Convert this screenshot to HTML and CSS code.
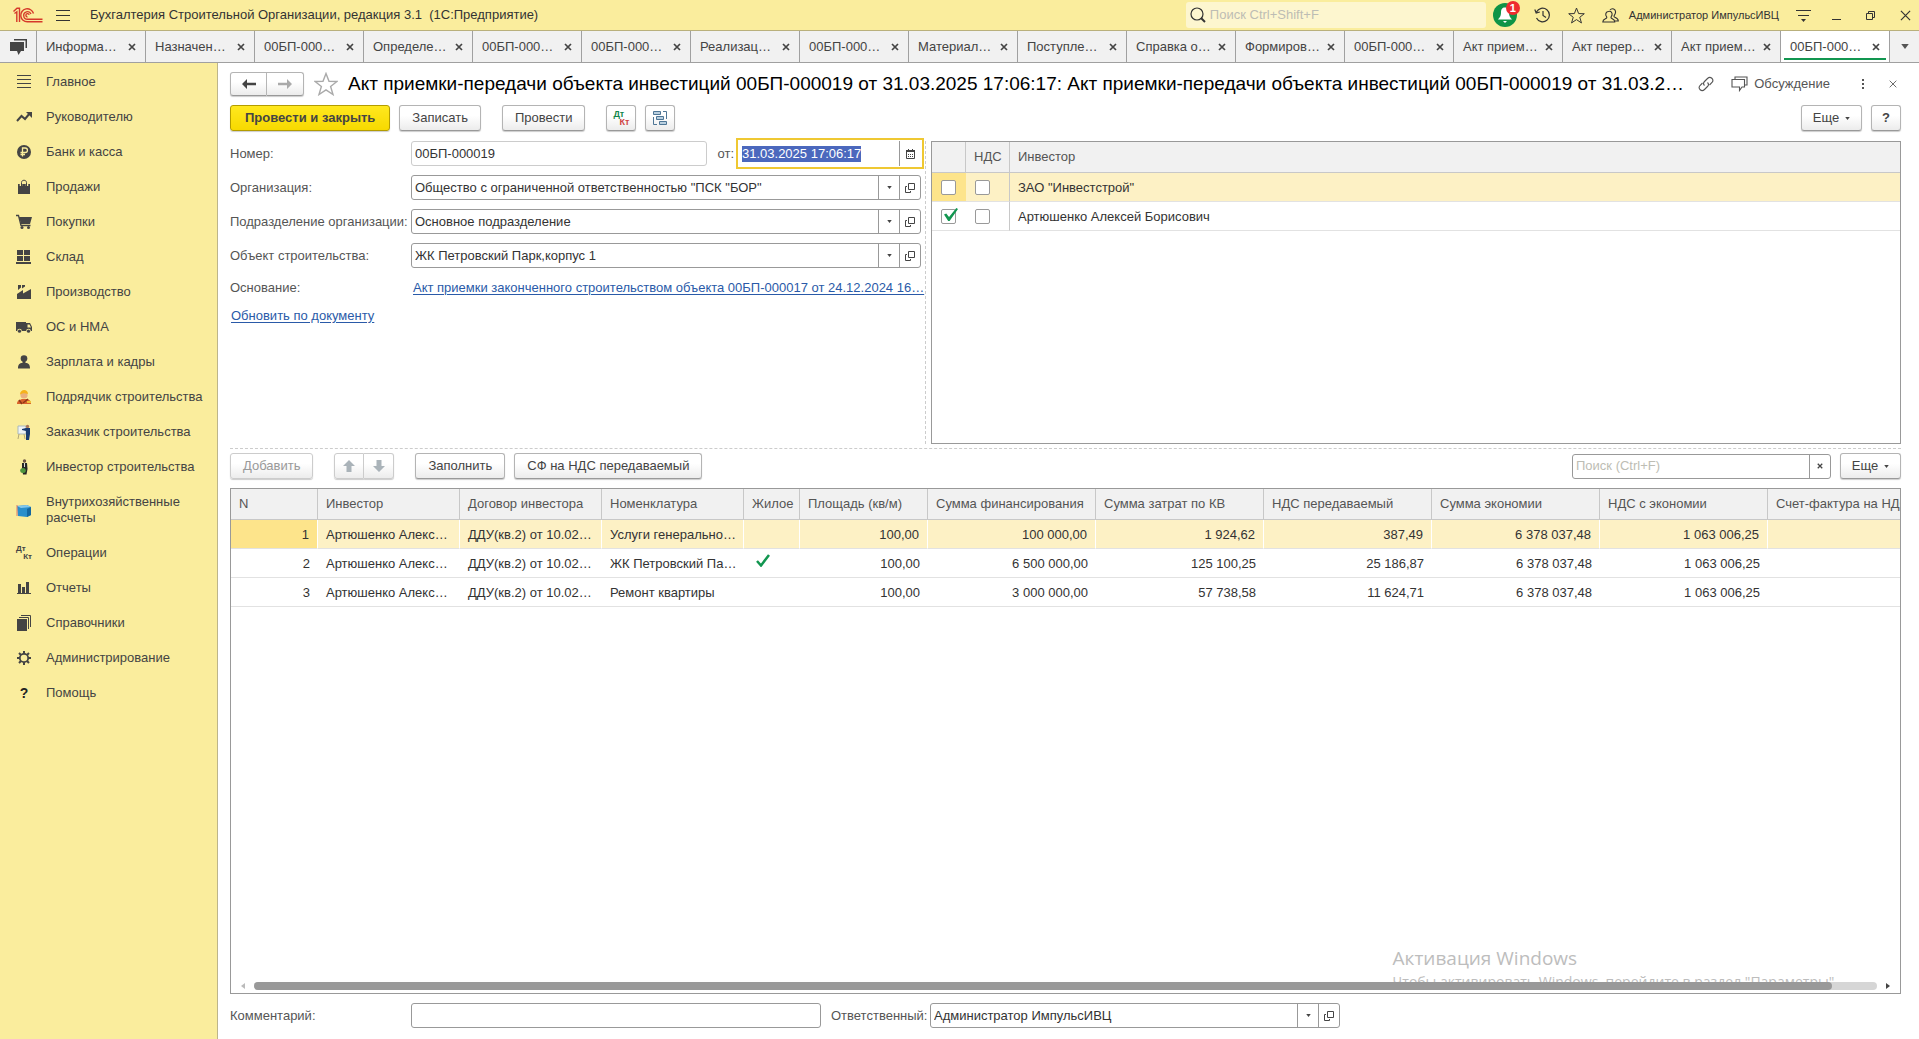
FILE: index.html
```html
<!DOCTYPE html>
<html lang="ru">
<head>
  <meta charset="UTF-8">
  <title>Бухгалтерия Строительной Организации, редакция 3.1</title>
  <link rel="stylesheet" href="styles.css">
</head>
<body>
<svg class="sprite" aria-hidden="true">
  <symbol id="i-x" viewBox="0 0 8 8"><path d="M1 1l6 6M7 1L1 7" fill="none" stroke="currentColor" stroke-width="1.7"/></symbol>
  <symbol id="i-x-thin" viewBox="0 0 12 12"><path d="M1 1l10 10M11 1L1 11" fill="none" stroke="currentColor" stroke-width="1.3"/></symbol>
  <symbol id="i-down" viewBox="0 0 6 4"><path d="M0 0h6L3 4z" fill="currentColor"/></symbol>
  <symbol id="i-open" viewBox="0 0 10 10"><path d="M3.5.5h6v6h-6zM2 3.5H.5v6h5V8" fill="none" stroke="currentColor"/></symbol>
  <symbol id="i-star" viewBox="0 0 24 24"><path d="M12 1.500l3 7.800 8 .2-6.400 5 2.400 8-7-4.700-7 4.700 2.400-8L1 9.500l8-.2z" fill="none" stroke="currentColor" stroke-width="1.400"/></symbol>
</svg>

<header class="topbar">
  <svg class="logo" viewBox="0 0 30 16" fill="none" stroke="#d5392a" stroke-width="1.400">
    <path d="M.5 4.500L4 1.200h2.500V15M3.800 15V4.800L1.500 6.500"/>
    <path d="M20.500 6.500A6.500 6.500 0 1 0 14.500 14.800H29.500M18 7A3.800 3.800 0 1 0 14.500 12.300H29.500M16.200 7.800a1.700 1.700 0 1 0-1.700 2.200"/>
  </svg>
  <button class="icon-btn burger" aria-label="Меню"><svg width="14" height="11" viewBox="0 0 14 11"><path d="M0 .5h14M0 5.500h14M0 10.500h14" stroke="#333"/></svg></button>
  <h1 class="app-title">Бухгалтерия Строительной Организации, редакция 3.1&nbsp; (1С:Предприятие)</h1>
  <div class="global-search">
    <svg width="16" height="16" viewBox="0 0 16 16" fill="none" stroke="#333" stroke-width="1.200"><circle cx="7" cy="7" r="6"/><path d="M11 11l4 4" stroke-width="2"/></svg>
    <input type="text" placeholder="Поиск Ctrl+Shift+F" aria-label="Поиск">
  </div>
  <button class="icon-btn bell" aria-label="Оповещения">
    <svg width="24" height="24" viewBox="0 0 24 24"><circle cx="12" cy="12" r="12" fill="#0f9447"/><path d="M12 4.500c-3 0-4 2-4 5 0 4-1.500 5-3 7h14c-1.500-2-3-3-3-7 0-3-1-5-4-5zM10 18h4l-2 2z" fill="#fff"/></svg>
    <span class="badge">1</span>
  </button>
  <button class="icon-btn" aria-label="История"><svg width="17" height="16" viewBox="0 0 17 16" fill="none" stroke="#333" stroke-width="1.200"><path d="M2.500 5A6.800 6.800 0 1 1 2.500 11M.8 2.500L2.200 6l3.600-1M9 4v4.500l3 2"/></svg></button>
  <button class="icon-btn" aria-label="Избранное"><svg width="17" height="17"><use href="#i-star"/></svg></button>
  <button class="icon-btn" aria-label="Пользователь"><svg width="17" height="15" viewBox="0 0 17 15" fill="none" stroke="#333" stroke-width="1.100"><path d="M8 2c2-2.500 6-1 5.500 2.500-.2 2-1.500 2.500-1.500 4 0 1.200 4.300 1 4.300 4.500H13"/><path d="M6.500 3.500c2.500-.8 4 1 3.500 3.500-.3 1.200-1 1.500-1 2.500 0 1.500 3.800 1 3.800 4.500H.8c0-3.500 4-3 4-4.500 0-1-.8-1.300-1-2.500-.3-1.800.8-3.500 2.700-3.500z"/></svg></button>
  <a class="user" href="#">Администратор ИмпульсИВЦ</a>
  <button class="icon-btn settings" aria-label="Настройка"><svg width="15" height="13" viewBox="0 0 15 13"><path d="M0 1.500h15M2 6.500h11" stroke="#333"/><path d="M5 10h5l-2.500 3z" fill="#333"/></svg></button>
  <button class="icon-btn win" aria-label="Свернуть"><svg width="9" height="10" viewBox="0 0 9 10"><path d="M0 9.500h9" stroke="#333"/></svg></button>
  <button class="icon-btn win" aria-label="Развернуть"><svg width="9" height="9" viewBox="0 0 9 9" fill="none" stroke="#333"><path d="M.5 2.500h6v6h-6zM2.500 2V.5h6v6H7"/></svg></button>
  <button class="icon-btn win" aria-label="Закрыть"><svg width="11" height="11"><use href="#i-x-thin"/></svg></button>
</header>

<nav class="tabs">
  <button class="tabs-chat" aria-label="Обсуждения"><svg width="17" height="16" viewBox="0 0 17 16"><path d="M4 0h13v9h-1.500V1.500H4z" fill="#444"/><path d="M0 3h14v9h-3l-2.500 4L7 12H0z" fill="#444"/></svg></button>
  <div class="tab"><a href="#">Информа…</a><button aria-label="Закрыть"><svg><use href="#i-x"/></svg></button></div>
  <div class="tab"><a href="#">Назначен…</a><button aria-label="Закрыть"><svg><use href="#i-x"/></svg></button></div>
  <div class="tab"><a href="#">00БП-000…</a><button aria-label="Закрыть"><svg><use href="#i-x"/></svg></button></div>
  <div class="tab"><a href="#">Определе…</a><button aria-label="Закрыть"><svg><use href="#i-x"/></svg></button></div>
  <div class="tab"><a href="#">00БП-000…</a><button aria-label="Закрыть"><svg><use href="#i-x"/></svg></button></div>
  <div class="tab"><a href="#">00БП-000…</a><button aria-label="Закрыть"><svg><use href="#i-x"/></svg></button></div>
  <div class="tab"><a href="#">Реализац…</a><button aria-label="Закрыть"><svg><use href="#i-x"/></svg></button></div>
  <div class="tab"><a href="#">00БП-000…</a><button aria-label="Закрыть"><svg><use href="#i-x"/></svg></button></div>
  <div class="tab"><a href="#">Материал…</a><button aria-label="Закрыть"><svg><use href="#i-x"/></svg></button></div>
  <div class="tab"><a href="#">Поступле…</a><button aria-label="Закрыть"><svg><use href="#i-x"/></svg></button></div>
  <div class="tab"><a href="#">Справка о…</a><button aria-label="Закрыть"><svg><use href="#i-x"/></svg></button></div>
  <div class="tab"><a href="#">Формиров…</a><button aria-label="Закрыть"><svg><use href="#i-x"/></svg></button></div>
  <div class="tab"><a href="#">00БП-000…</a><button aria-label="Закрыть"><svg><use href="#i-x"/></svg></button></div>
  <div class="tab"><a href="#">Акт прием…</a><button aria-label="Закрыть"><svg><use href="#i-x"/></svg></button></div>
  <div class="tab"><a href="#">Акт перер…</a><button aria-label="Закрыть"><svg><use href="#i-x"/></svg></button></div>
  <div class="tab"><a href="#">Акт прием…</a><button aria-label="Закрыть"><svg><use href="#i-x"/></svg></button></div>
  <div class="tab active"><a href="#">00БП-000…</a><button aria-label="Закрыть"><svg><use href="#i-x"/></svg></button></div>
  <button class="tabs-more" aria-label="Все вкладки"><svg width="8" height="5"><use href="#i-down"/></svg></button>
</nav>

<div class="workspace">
  <nav class="sidebar">
    <a href="#"><svg viewBox="0 0 16 16"><path d="M1 1.500h14M1 5.500h14M1 9.500h14M1 13.500h14" stroke="#444"/></svg>Главное</a>
    <a href="#"><svg viewBox="0 0 16 16"><path d="M1 12l4.500-5 3.500 3 5-6" fill="none" stroke="#444" stroke-width="2"/><path d="M10 3h6v6z" fill="#444"/></svg>Руководителю</a>
    <a href="#"><svg viewBox="0 0 16 16"><circle cx="8" cy="8" r="7" fill="#444"/><path d="M6.500 12.500V4h2.700a2.200 2.200 0 0 1 0 4.500H4.500M4.500 10.500H9" fill="none" stroke="#faed9d" stroke-width="1.300"/></svg>Банк и касса</a>
    <a href="#"><svg viewBox="0 0 16 16"><path d="M2 5h12v10H2z" fill="#444"/><path d="M5 7V3.500C5 0 11 0 11 3.500V7" fill="none" stroke="#faed9d" stroke-width="2.500"/><path d="M5.500 7V3.500C5.500.5 10.500.5 10.500 3.500V7" fill="none" stroke="#444"/></svg>Продажи</a>
    <a href="#"><svg viewBox="0 0 16 16"><path d="M0 1.500h2.500L5 11.500h9.500" fill="none" stroke="#444" stroke-width="1.300"/><path d="M3 3h13l-2 7H5z" fill="#444"/><circle cx="6" cy="13.500" r="1.500" fill="#444"/><circle cx="12.500" cy="13.500" r="1.500" fill="#444"/></svg>Покупки</a>
    <a href="#"><svg viewBox="0 0 16 16"><path d="M1 1h6v5H1zM8 1h6v5H8zM1 7h6v5H1zM8 7h6v5H8zM0 13h15v2H0z" fill="#444"/></svg>Склад</a>
    <a href="#"><svg viewBox="0 0 16 16"><path d="M1 15V10l6-4v3.500L15 5v10z" fill="#444"/><path d="M2 1h3v2.500L2 6zM6 1h3v1.500L6 4.500z" fill="#444"/></svg>Производство</a>
    <a href="#"><svg viewBox="0 0 16 16"><path d="M0 3h10v1h4l2 4v4H0z" fill="#444"/><path d="M11.500 5.500h2L15 8.500h-3.500z" fill="#faed9d"/><circle cx="3.500" cy="12" r="2.300" fill="#faed9d"/><circle cx="12.500" cy="12" r="2.300" fill="#faed9d"/><circle cx="3.500" cy="12.200" r="1.600" fill="#444"/><circle cx="12.500" cy="12.200" r="1.600" fill="#444"/></svg>ОС и НМА</a>
    <a href="#"><svg viewBox="0 0 16 16"><circle cx="8" cy="4.500" r="3.300" fill="#444"/><path d="M6.500 6h3v3c3 0 4.500 1.500 4.500 5.500H2C2 10.500 3.500 9 6.500 9z" fill="#444"/></svg>Зарплата и кадры</a>
    <a href="#"><svg viewBox="0 0 16 16"><path d="M1 15c0-4 3-4 5-5h5c3 1 4 2 4 5z" fill="#d9622b"/><path d="M3 11l3 4M7 14l5-4" stroke="#8d3719" stroke-width="1.500"/><circle cx="8" cy="6" r="3.600" fill="#eab07e"/><path d="M4 5.500C4-.5 12-.5 12 5c-3-1-5-1-8 .5z" fill="#f6b21c"/><path d="M11 12h4v2h-4z" fill="#f0c03a"/></svg>Подрядчик строительства</a>
    <a href="#"><svg viewBox="0 0 16 16"><path d="M2 2h8v8H2z" fill="#eef3f5" stroke="#a9b9bd"/><path d="M3 10l-1 5M8 10l1 5" stroke="#b4a878"/><circle cx="11.500" cy="2.500" r="1.700" fill="#a8765a"/><path d="M6 5l4-1h4v6l-1 6h-3V7L6 6z" fill="#183c70"/></svg>Заказчик строительства</a>
    <a href="#"><svg viewBox="0 0 16 16"><circle cx="8.500" cy="2" r="1.700" fill="#6f5543"/><path d="M6 4h5l.5 6-1 5.500H7L6 10z" fill="#252625"/><path d="M8 4h1v4H8z" fill="#ddd"/><ellipse cx="7" cy="11.500" rx="2.800" ry="2.500" fill="#4f963f"/></svg>Инвестор строительства</a>
    <a href="#"><svg viewBox="0 0 16 16"><path d="M1 4l10-1 4 2v8l-4 2-9-1z" fill="#298fcb"/><path d="M1 4l10-1 4 2-10 1z" fill="#83c8ec"/><path d="M11 7l4-2v8l-4 2z" fill="#14679f"/><path d="M1 3v11" stroke="#dc7968"/></svg>Внутрихозяйственные расчеты</a>
    <a href="#"><span class="dtkt"><b>Дт</b><b>Кт</b></span>Операции</a>
    <a href="#"><svg viewBox="0 0 16 16"><path d="M2 4h3v9H2zM6 7h3v6H6zM10 2h3v11h-3zM1 13h14v1H1z" fill="#444"/></svg>Отчеты</a>
    <a href="#"><svg viewBox="0 0 16 16"><path d="M1 4h10v12H1z" fill="#444"/><path d="M3 2.500h9.500V14M5 .5h9.500V12" fill="none" stroke="#444"/></svg>Справочники</a>
    <a href="#"><svg viewBox="0 0 16 16"><circle cx="8" cy="8" r="4.200" fill="none" stroke="#444" stroke-width="1.800"/><path d="M8 1v3M8 12v3M1 8h3M12 8h3M3 3l2 2M11 11l2 2M13 3l-2 2M5 11l-2 2" stroke="#444" stroke-width="2"/></svg>Администрирование</a>
    <a href="#"><b class="help-mark">?</b>Помощь</a>
  </nav>

  <main class="document">
    <div class="doc-head">
      <div class="btn-pair">
        <button class="btn" aria-label="Назад"><svg width="14" height="10" viewBox="0 0 14 10"><path d="M5 0v3.700h9v2.600H5V10L0 5z" fill="#444"/></svg></button>
        <button class="btn" aria-label="Вперед"><svg width="14" height="10" viewBox="0 0 14 10"><path d="M9 0v3.700H0v2.600h9V10l5-5z" fill="#aaa"/></svg></button>
      </div>
      <button class="icon-btn fav" aria-label="В избранное"><svg width="24" height="24"><use href="#i-star"/></svg></button>
      <h2>Акт приемки-передачи объекта инвестиций 00БП-000019 от 31.03.2025 17:06:17: Акт приемки-передачи объекта инвестиций 00БП-000019 от 31.03.2…</h2>
      <div class="doc-tools">
        <button class="icon-btn" aria-label="Ссылка"><svg width="16" height="16" viewBox="0 0 16 16" fill="none" stroke="#555" stroke-width="1.100"><path d="M6.500 9.500c-1.500-1.500-1-3 0-4l3-3c3-3 7 1 4.500 4l-2.500 2.500M9.500 6.500c1.500 1.500 1 3 0 4l-3 3c-3 3-7-1-4.500-4L4.500 7"/></svg></button>
        <button class="icon-btn discuss"><svg width="17" height="16" viewBox="0 0 17 16" fill="none" stroke="#555" stroke-width="1.100"><path d="M4 3V1h12v8h-2M1 3.500h12.500V11H11l-2.500 3.500V11H1z"/></svg>Обсуждение</button>
        <button class="icon-btn dots" aria-label="Еще"><svg width="2" height="10" viewBox="0 0 2 10"><path d="M0 0h2v2H0zM0 4h2v2H0zM0 8h2v2H0z" fill="#555"/></svg></button>
        <button class="icon-btn" aria-label="Закрыть"><svg width="8" height="8"><use href="#i-x-thin"/></svg></button>
      </div>
    </div>

    <div class="toolbar">
      <button class="btn primary">Провести и закрыть</button>
      <button class="btn">Записать</button>
      <button class="btn group">Провести</button>
      <button class="btn square group" aria-label="Дт/Кт"><span class="dtkt color"><b>Дт</b><b>Кт</b></span></button>
      <button class="btn square" aria-label="Структура подчиненности"><svg width="16" height="16" viewBox="0 0 16 16" fill="#b9cfdf" stroke="#4e7696"><path d="M1.500 1.500h7v3h-7zM4.500 6.500h7v3h-7zM7.500 11.500h7v3h-7z"/><path d="M11 1.500h3.500V9M1.500 7v7.500H5" fill="none"/></svg></button>
      <button class="btn more right">Еще<svg width="5" height="3"><use href="#i-down"/></svg></button>
      <button class="btn square"><b>?</b></button>
    </div>

    <div class="split">
      <form class="fields">
        <label for="number">Номер:</label>
        <div class="number-row">
          <input class="box readonly" type="text" id="number" value="00БП-000019" readonly>
          <label for="date">от:</label>
          <div class="combo focused">
            <input type="text" id="date" value="31.03.2025 17:06:17">
            <button type="button" aria-label="Календарь"><svg width="9" height="10" viewBox="0 0 9 10"><path d="M.5 1.500h8v8h-8z" fill="none" stroke="#444"/><path d="M0 1h9v2H0zM2 0h1v1H2zM6 0h1v1H6z" fill="#444"/><path d="M2 5.500h5M2 7.500h5" stroke="#444" stroke-dasharray="1 1"/></svg></button>
          </div>
        </div>

        <label for="org">Организация:</label>
        <div class="combo">
          <input type="text" id="org" value="Общество с ограниченной ответственностью &quot;ПСК &quot;БОР&quot;">
          <button type="button" aria-label="Выбрать"><svg width="5" height="3"><use href="#i-down"/></svg></button>
          <button type="button" aria-label="Открыть"><svg width="10" height="10"><use href="#i-open"/></svg></button>
        </div>

        <label for="dept">Подразделение организации:</label>
        <div class="combo">
          <input type="text" id="dept" value="Основное подразделение">
          <button type="button" aria-label="Выбрать"><svg width="5" height="3"><use href="#i-down"/></svg></button>
          <button type="button" aria-label="Открыть"><svg width="10" height="10"><use href="#i-open"/></svg></button>
        </div>

        <label for="object">Объект строительства:</label>
        <div class="combo">
          <input type="text" id="object" value="ЖК Петровский Парк,корпус 1">
          <button type="button" aria-label="Выбрать"><svg width="5" height="3"><use href="#i-down"/></svg></button>
          <button type="button" aria-label="Открыть"><svg width="10" height="10"><use href="#i-open"/></svg></button>
        </div>

        <span class="caption">Основание:</span>
        <a class="link" href="#">Акт приемки законченного строительством объекта 00БП-000017 от 24.12.2024 16…</a>
        <a class="link refresh" href="#">Обновить по документу</a>
      </form>
      <div class="splitter"></div>
      <div class="grid-box investors">
        <table>
          <colgroup><col class="c-check"><col class="c-nds"><col></colgroup>
          <thead><tr><th></th><th>НДС</th><th>Инвестор</th></tr></thead>
          <tbody>
            <tr class="selected">
              <td class="current"><input type="checkbox" aria-label="Выбран"></td>
              <td><input type="checkbox" aria-label="НДС"></td>
              <td>ЗАО "Инвестстрой"</td>
            </tr>
            <tr>
              <td><input type="checkbox" aria-label="Выбран" checked></td>
              <td><input type="checkbox" aria-label="НДС"></td>
              <td>Артюшенко Алексей Борисович</td>
            </tr>
          </tbody>
        </table>
      </div>
    </div>

    <div class="toolbar lower">
      <button class="btn" disabled>Добавить</button>
      <div class="btn-pair group">
        <button class="btn" disabled aria-label="Вверх"><svg width="12" height="12" viewBox="0 0 12 12"><path d="M6 0l6 6H8.500v6h-5V6H0z" fill="#aab3b9"/></svg></button>
        <button class="btn" disabled aria-label="Вниз"><svg width="12" height="12" viewBox="0 0 12 12"><path d="M6 12l6-6H8.500V0h-5v6H0z" fill="#aab3b9"/></svg></button>
      </div>
      <button class="btn group">Заполнить</button>
      <button class="btn">СФ на НДС передаваемый</button>
      <div class="combo find right">
        <input type="text" placeholder="Поиск (Ctrl+F)" aria-label="Поиск">
        <button type="button" aria-label="Очистить"><svg width="6" height="6"><use href="#i-x"/></svg></button>
      </div>
      <button class="btn more">Еще<svg width="5" height="3"><use href="#i-down"/></svg></button>
    </div>

    <div class="grid-box items">
      <table>
        <colgroup>
          <col class="c-n"><col class="c-text"><col class="c-text"><col class="c-text"><col class="c-live"><col class="c-area">
          <col class="c-sum"><col class="c-sum"><col class="c-sum"><col class="c-sum"><col class="c-sum"><col class="c-sum">
        </colgroup>
        <thead>
          <tr><th>N</th><th>Инвестор</th><th>Договор инвестора</th><th>Номенклатура</th><th>Жилое</th><th>Площадь (кв/м)</th><th>Сумма финансирования</th><th>Сумма затрат по КВ</th><th>НДС передаваемый</th><th>Сумма экономии</th><th>НДС с экономии</th><th>Счет-фактура на НДС</th></tr>
        </thead>
        <tbody>
          <tr class="selected"><td class="num current">1</td><td>Артюшенко Алекс…</td><td>ДДУ(кв.2) от 10.02…</td><td>Услуги генерально…</td><td></td><td class="num">100,00</td><td class="num">100 000,00</td><td class="num">1 924,62</td><td class="num">387,49</td><td class="num">6 378 037,48</td><td class="num">1 063 006,25</td><td></td></tr>
          <tr><td class="num">2</td><td>Артюшенко Алекс…</td><td>ДДУ(кв.2) от 10.02…</td><td>ЖК Петровский Па…</td><td class="live"><svg width="14" height="13" viewBox="0 0 14 13"><path d="M1 7l4 4.500L13 1" fill="none" stroke="#129650" stroke-width="2.500"/></svg></td><td class="num">100,00</td><td class="num">6 500 000,00</td><td class="num">125 100,25</td><td class="num">25 186,87</td><td class="num">6 378 037,48</td><td class="num">1 063 006,25</td><td></td></tr>
          <tr><td class="num">3</td><td>Артюшенко Алекс…</td><td>ДДУ(кв.2) от 10.02…</td><td>Ремонт квартиры</td><td></td><td class="num">100,00</td><td class="num">3 000 000,00</td><td class="num">57 738,58</td><td class="num">11 624,71</td><td class="num">6 378 037,48</td><td class="num">1 063 006,25</td><td></td></tr>
        </tbody>
      </table>
      <div class="watermark">
        <p class="wm-title">Активация Windows</p>
        <p>Чтобы активировать Windows, перейдите в раздел "Параметры".</p>
      </div>
      <div class="scrollbar">
        <svg class="arrow off" width="5" height="6" viewBox="0 0 5 6"><path d="M5 0v6L1 3z" fill="currentColor"/></svg>
        <div class="track"><div class="thumb" style="width: 97.2%"></div></div>
        <svg class="arrow" width="5" height="6" viewBox="0 0 5 6"><path d="M0 0v6l4-3z" fill="currentColor"/></svg>
      </div>
    </div>

    <div class="doc-foot">
      <label for="comment">Комментарий:</label>
      <input class="box" type="text" id="comment">
      <label for="owner">Ответственный:</label>
      <div class="combo">
        <input type="text" id="owner" value="Администратор ИмпульсИВЦ">
        <button type="button" aria-label="Выбрать"><svg width="5" height="3"><use href="#i-down"/></svg></button>
        <button type="button" aria-label="Открыть"><svg width="10" height="10"><use href="#i-open"/></svg></button>
      </div>
    </div>
  </main>
</div>

<script>
  // При открытии документа дата выделена
  const date = document.getElementById("date");
  date.focus();
  date.select();
</script>
</body>
</html>
```
FILE: styles.css
```css
* { box-sizing: border-box; }
body {
  font-family: "Liberation Sans", Arial, sans-serif;
  font-size: 13px;
  line-height: 16px;
  color: #333;
  background: #fff;
  display: flex;
  flex-direction: column;
  min-height: 100vh;
  margin: 0;
}
h1, h2, p { margin: 0; font-weight: 400; }
a { color: inherit; text-decoration: none; }
button, input { font: inherit; color: inherit; }
button { cursor: pointer; }
svg { display: block; flex: none; }
.sprite { display: none; }
.icon-btn {
  display: flex;
  align-items: center;
  padding: 0;
  border: none;
  background: none;
}

/* Верхняя панель */
.topbar {
  display: flex;
  align-items: center;
  gap: 17px;
  height: 31px;
  padding: 0 8px 0 13px;
  background: #faed9d;
  border-bottom: 1px solid #b9b07c;
}
.logo { width: 30px; height: 16px; }
.burger { margin-left: -4px; }
.app-title { font-size: 13px; margin: 0 auto 0 3px; }
.global-search {
  display: flex;
  align-items: center;
  gap: 4px;
  width: 300px;
  height: 26px;
  padding: 0 4px;
  margin-right: -10px;
  background: #fdf6cf;
  border-radius: 3px;
}
.global-search input {
  flex: 1;
  min-width: 0;
  padding: 0;
  border: none;
  outline: none;
  background: none;
}
input::placeholder { color: #bdbdb4; opacity: 1; }
.bell { position: relative; }
.badge {
  position: absolute;
  top: -2px;
  right: -3px;
  width: 14px;
  height: 14px;
  border-radius: 50%;
  background: #ee2b2f;
  color: #fff;
  font-size: 11px;
  line-height: 14px;
  font-weight: 700;
}
.user { font-size: 11px; margin-left: -7px; }
.settings { margin-right: 4px; }
.win { margin-right: 8px; }
.win:last-child { margin-right: 0; }

/* Вкладки */
.tabs {
  display: flex;
  height: 32px;
  background: #f1f1f1;
  border-bottom: 1px solid #a0a0a0;
}
.tabs-chat, .tabs-more {
  display: flex;
  align-items: center;
  justify-content: center;
  flex: none;
  width: 36px;
  padding: 0;
  border: none;
  background: none;
  color: #555;
}
.tabs-more { width: 30px; border-left: 1px solid #a0a0a0; }
.tab {
  display: flex;
  align-items: center;
  justify-content: space-between;
  flex: 1;
  min-width: 0;
  padding: 0 9px;
  border-left: 1px solid #a0a0a0;
  position: relative;
}
.tab a { white-space: nowrap; color: #444; }
.tab button { padding: 0; border: none; background: none; color: #444; }
.tab svg { width: 8px; height: 8px; }
.tab.active { background: #fff; }
.tab.active::after {
  content: "";
  position: absolute;
  left: 3px;
  right: 3px;
  bottom: 2px;
  height: 2px;
  background: #129650;
}

.workspace { display: flex; flex: 1; }

/* Разделы */
.sidebar {
  flex: none;
  width: 218px;
  padding-top: 2px;
  background: #faed9d;
  border-right: 1px solid #bdb58a;
}
.sidebar a {
  display: flex;
  align-items: center;
  gap: 14px;
  min-height: 35px;
  padding: 9px 8px 10px 16px;
  color: #444;
}
.sidebar svg { width: 16px; height: 16px; }
.help-mark { width: 16px; text-align: center; color: #222; font-size: 14px; }
.dtkt {
  display: flex;
  flex-direction: column;
  flex: none;
  width: 16px;
  font-size: 8px;
  line-height: 8px;
  text-align: left;
}
.dtkt b:last-child { text-align: right; }
.dtkt.color { font-size: 9px; }
.dtkt.color b:first-child { color: #12864a; }
.dtkt.color b:last-child { color: #cf4444; }

/* Документ */
.document {
  display: flex;
  flex-direction: column;
  flex: 1;
  min-width: 0;
  padding: 8px 18px 11px 12px;
}
.doc-head { display: flex; align-items: center; gap: 10px; height: 25px; }
.doc-head h2 {
  flex: 1;
  min-width: 0;
  font-size: 19px;
  line-height: 24px;
  color: #000;
  white-space: nowrap;
}
.fav { color: #aaa; }
.doc-tools {
  display: flex;
  align-items: center;
  gap: 17px;
  margin-left: 12px;
  padding-right: 4px;
  color: #555;
}
.discuss { gap: 6px; }
.dots { margin: 0 8px 0 15px; }

.btn {
  display: flex;
  align-items: center;
  justify-content: center;
  height: 26px;
  padding: 0 12px;
  border: 1px solid #b4b4b4;
  border-bottom-color: #999;
  border-radius: 3px;
  background: linear-gradient(#fff 40%, #ececec);
  box-shadow: 0 1px 1px #ccc;
  color: #444;
  white-space: nowrap;
}
.btn:disabled { color: #999; border-color: #ccc; }
.btn.primary {
  padding: 0 14px;
  background: linear-gradient(#ffe81f, #f7d900);
  border-color: #b39c00;
  font-weight: 700;
}
.btn.square { width: 30px; padding: 0; }
.btn.more { width: 61px; gap: 6px; padding: 0; }
.btn.group, .btn-pair.group { margin-left: 12px; }
.right { margin-left: auto; }
.btn-pair { display: flex; }
.btn-pair .btn { width: 30px; padding: 0; }
.btn-pair .btn:first-child { border-radius: 3px 0 0 3px; }
.btn-pair .btn:last-child { border-left: none; border-radius: 0 3px 3px 0; }
.doc-head .btn-pair .btn { width: 37px; height: 24px; }

.toolbar { display: flex; align-items: center; gap: 9px; margin-top: 9px; }
.toolbar.lower {
  margin-top: 4px;
  padding-top: 4px;
  border-top: 1px dashed #ccc;
}

.split {
  display: grid;
  grid-template-columns: 691fr 10px 970fr;
  margin-top: 10px;
}
.splitter { margin-left: 4px; border-left: 1px dashed #ccc; }
.fields {
  display: grid;
  grid-template-columns: 181px minmax(0, 1fr);
  grid-auto-rows: 25px;
  row-gap: 9px;
  align-items: center;
  align-content: start;
  color: #555;
}
.number-row { display: flex; align-items: center; }
.number-row .box { flex: 1; min-width: 0; }
.number-row label { margin: 0 2px 0 10px; }
.box, .combo {
  height: 25px;
  border: 1px solid #999;
  border-radius: 3px;
  background: #fff;
  color: #333;
}
.box { padding: 0 3px; outline: none; }
.box.readonly { border-color: #ccc; }
.combo { display: flex; overflow: hidden; }
.combo input {
  flex: 1;
  min-width: 0;
  padding: 0 3px;
  border: none;
  outline: none;
  background: none;
}
.combo button {
  display: flex;
  align-items: center;
  justify-content: center;
  width: 21px;
  padding: 0;
  border: none;
  border-left: 1px solid #999;
  background: none;
  color: #444;
}
.combo.focused {
  width: 188px;
  height: 31px;
  margin: -3px -3px -3px 0;
  border: 2px solid #efc832;
  border-radius: 0;
  padding: 1px 2px 1px 1px;
}
.combo input::selection { background: #4b68bd; color: #fff; }
.combo.find { width: 259px; }
.link {
  padding-left: 2px;
  color: #2a5aa8;
  text-decoration: underline;
  text-underline-offset: 2px;
  white-space: nowrap;
}
.fields .caption, .fields .link { margin-top: -4px; }
.fields .refresh { grid-column: 1 / 3; margin-top: -16px; padding-left: 1px; }

/* Таблицы */
.grid-box { border: 1px solid #999; background: #fff; overflow: hidden; }
.grid-box table { width: 100%; table-layout: fixed; border-collapse: separate; border-spacing: 0; }
.grid-box th {
  height: 31px;
  padding: 0 8px;
  border-right: 1px solid #c8c8c8;
  border-bottom: 1px solid #c8c8c8;
  background: #f1f1f1;
  color: #555;
  font-weight: 400;
  text-align: left;
  white-space: nowrap;
}
.grid-box td {
  height: 29px;
  padding: 1px 8px 0;
  border-bottom: 1px solid #e2e2e2;
  white-space: nowrap;
  overflow: hidden;
}
.grid-box .num { text-align: right; }
.grid-box .selected td { background: #fdf1c5; border-right: 1px solid #fff; }
.grid-box .selected .current { background: #fde48b; }
.grid-box tr > :last-child { border-right: none; }

.investors { height: 303px; }
.investors td:nth-child(2) { border-right: 1px solid #c8c8c8; }
.investors .selected td:nth-child(2) { border-right-color: #c8c8c8; }
.investors .selected .current { border-right: none; }
.c-check { width: 34px; }
.c-nds { width: 44px; }
.investors input {
  appearance: none;
  display: block;
  position: relative;
  width: 15px;
  height: 15px;
  margin: 0 1px;
  border: 1px solid #999;
  border-radius: 2px;
  background: #fff;
}
.investors td:first-child { overflow: visible; }
.investors input:checked::after {
  content: "";
  position: absolute;
  left: 2px;
  top: -2px;
  width: 14px;
  height: 13px;
  background: #129650;
  clip-path: polygon(0 50%, 16% 42%, 36% 70%, 88% 0, 100% 8%, 40% 100%, 30% 100%);
}

.items {
  display: flex;
  flex-direction: column;
  flex: 1;
  position: relative;
  margin-top: 9px;
}
.items table { width: 1705px; min-width: 100%; }
.c-n { width: 87px; }
.c-text { width: 142px; }
.c-live { width: 56px; }
.c-area { width: 128px; }
.c-sum { width: 168px; }
.items td.live { padding: 0 12px 6px; }
.scrollbar {
  display: flex;
  align-items: center;
  gap: 9px;
  margin-top: auto;
  padding: 0 9px 3px;
  position: relative;
  background: #fff;
  color: #444;
}
.arrow.off { color: #bbb; }
.track { flex: 1; height: 8px; border-radius: 4px; background: #d6d6d6; }
.thumb { height: 8px; border-radius: 4px; background: #999; }
.watermark {
  position: absolute;
  right: 62px;
  bottom: 1px;
  font-family: "Open Sans", "Noto Sans", sans-serif;
  font-size: 14px;
  line-height: 20px;
  color: #bdbdbd;
}
.wm-title { font-size: 19px; line-height: 28px; }

.doc-foot {
  display: grid;
  grid-template-columns: 181px 410px 109px 410px;
  align-items: center;
  margin-top: 9px;
  color: #555;
}
.doc-foot label:nth-of-type(2) { padding-left: 10px; }
```
